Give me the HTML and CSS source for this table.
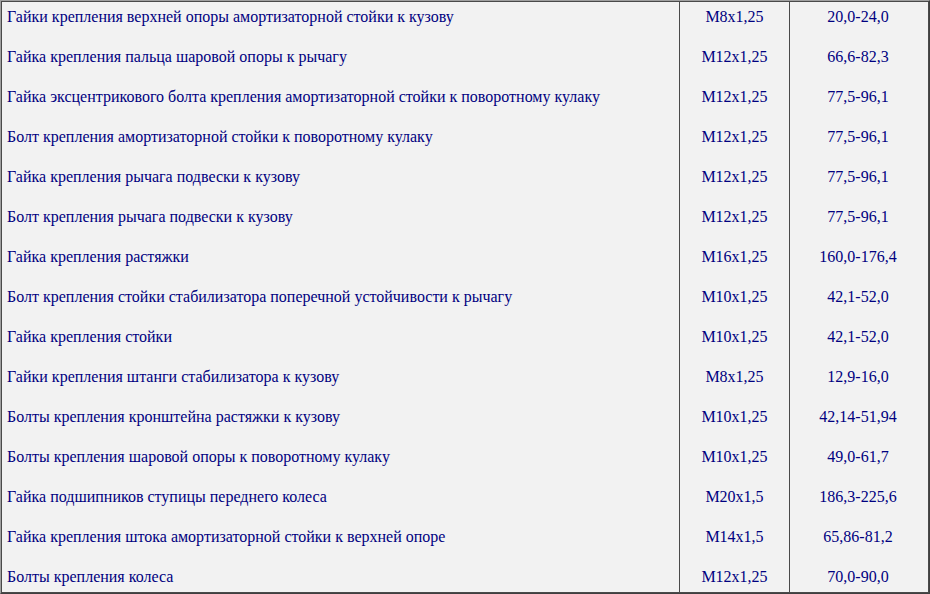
FILE: index.html
```html
<!DOCTYPE html>
<html lang="ru">
<head>
<meta charset="utf-8">
<title>Моменты затяжки</title>
<link rel="stylesheet" href="styles.css">
</head>
<body>
<div class="frame">
  <div class="sheet">
    <div class="c name first">Гайки крепления верхней опоры амортизаторной стойки к кузову</div><div class="c size first">M8x1,25</div><div class="c torque first">20,0-24,0</div>
    <div class="c name">Гайка крепления пальца шаровой опоры к рычагу</div><div class="c size">M12x1,25</div><div class="c torque">66,6-82,3</div>
    <div class="c name">Гайка эксцентрикового болта крепления амортизаторной стойки к поворотному кулаку</div><div class="c size">M12x1,25</div><div class="c torque">77,5-96,1</div>
    <div class="c name">Болт крепления амортизаторной стойки к поворотному кулаку</div><div class="c size">M12x1,25</div><div class="c torque">77,5-96,1</div>
    <div class="c name">Гайка крепления рычага подвески к кузову</div><div class="c size">M12x1,25</div><div class="c torque">77,5-96,1</div>
    <div class="c name">Болт крепления рычага подвески к кузову</div><div class="c size">M12x1,25</div><div class="c torque">77,5-96,1</div>
    <div class="c name">Гайка крепления растяжки</div><div class="c size">M16x1,25</div><div class="c torque">160,0-176,4</div>
    <div class="c name">Болт крепления стойки стабилизатора поперечной устойчивости к рычагу</div><div class="c size">M10x1,25</div><div class="c torque">42,1-52,0</div>
    <div class="c name">Гайка крепления стойки</div><div class="c size">M10x1,25</div><div class="c torque">42,1-52,0</div>
    <div class="c name">Гайки крепления штанги стабилизатора к кузову</div><div class="c size">M8x1,25</div><div class="c torque">12,9-16,0</div>
    <div class="c name">Болты крепления кронштейна растяжки к кузову</div><div class="c size">M10x1,25</div><div class="c torque">42,14-51,94</div>
    <div class="c name">Болты крепления шаровой опоры к поворотному кулаку</div><div class="c size">M10x1,25</div><div class="c torque">49,0-61,7</div>
    <div class="c name">Гайка подшипников ступицы переднего колеса</div><div class="c size">M20x1,5</div><div class="c torque">186,3-225,6</div>
    <div class="c name">Гайка крепления штока амортизаторной стойки к верхней опоре</div><div class="c size">M14x1,5</div><div class="c torque">65,86-81,2</div>
    <div class="c name">Болты крепления колеса</div><div class="c size">M12x1,25</div><div class="c torque">70,0-90,0</div>
  </div>
</div>
</body>
</html>
```

FILE: styles.css
```css
html, body {
  margin: 0;
  padding: 0;
  background: #f2f2f2;
}
body {
  width: 930px;
  height: 594px;
  overflow: hidden;
}
.frame {
  width: 930px;
  height: 594px;
  box-sizing: border-box;
  border-style: solid;
  border-width: 1px;
  border-color: #a0a0a0 #404040 #404040 #a0a0a0;
}
.sheet {
  box-sizing: border-box;
  height: 592px;
  border: 1px solid #4a4a4a;
  display: grid;
  grid-template-columns: 677px 110px 137px;
  grid-template-rows: 45px repeat(13, 40px) 1fr;
  font-family: "Liberation Serif", "Times New Roman", serif;
  font-size: 16px;
  line-height: 20px;
  color: #000080;
  background: #f2f2f2;
}
.c {
  white-space: nowrap;
}
.name {
  padding-left: 5px;
}
.size, .torque {
  text-align: center;
  border-left: 1px solid #4a4a4a;
}
.first {
  padding-top: 5px;
}
```
